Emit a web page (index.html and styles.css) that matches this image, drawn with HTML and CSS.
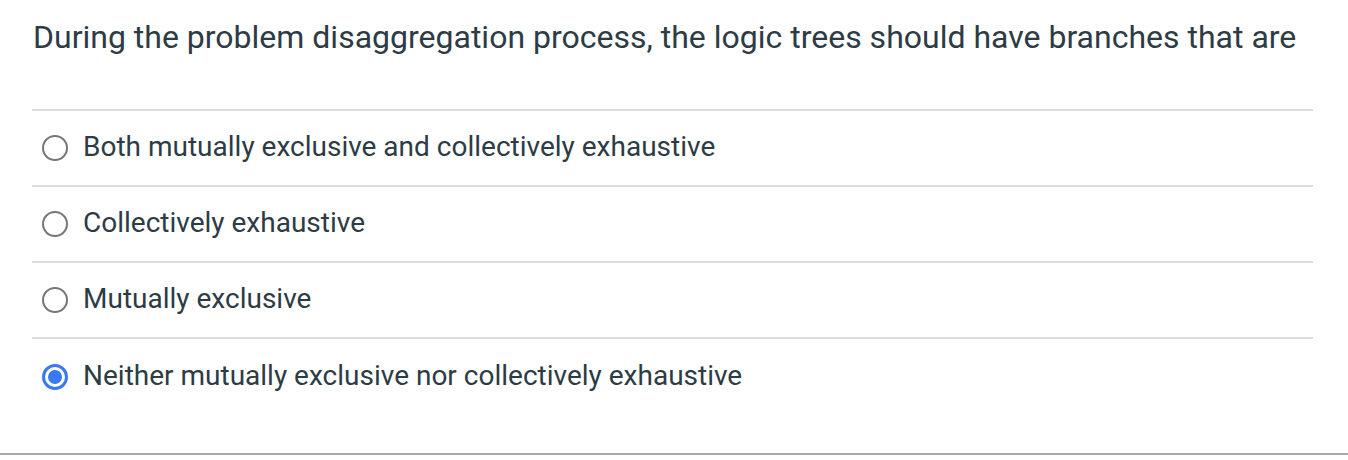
FILE: index.html
```html
<!DOCTYPE html>
<html>
<head>
<meta charset="utf-8">
<link rel="stylesheet" href="styles.css">
</head>
<body>
<div class="quiz">
  <div class="question">During the problem disaggregation process, the logic trees should have branches that are</div>
  <div class="answers">
    <label class="answer"><span class="radio"></span><span class="text">Both mutually exclusive and collectively exhaustive</span></label>
    <label class="answer"><span class="radio"></span><span class="text">Collectively exhaustive</span></label>
    <label class="answer"><span class="radio"></span><span class="text">Mutually exclusive</span></label>
    <label class="answer"><span class="radio checked"></span><span class="text">Neither mutually exclusive nor collectively exhaustive</span></label>
  </div>
</div>
<div class="bottom-rule"></div>
</body>
</html>
```
FILE: styles.css
```css
html, body {
  margin: 0;
  padding: 0;
  background: #fff;
}
body {
  font-family: Roboto, "Liberation Sans", sans-serif;
  color: #2d3b45;
  width: 1348px;
  height: 460px;
  overflow: hidden;
}
.quiz {
  padding: 0 35px 0 32px;
  height: 453px;
  box-sizing: border-box;
}
.question {
  font-size: 32px;
  line-height: 40px;
  padding: 17px 0 0 1px;
  height: 111px;
  box-sizing: border-box;
  border-bottom: 2px solid #dcdcdc;
}
.answer {
  display: flex;
  align-items: center;
  height: 76px;
  box-sizing: border-box;
  border-bottom: 2px solid #dcdcdc;
  font-size: 28px;
}
.answer:last-child {
  border-bottom: none;
}
.text {
  padding-bottom: 4px;
}
.radio {
  width: 26px;
  height: 26px;
  box-sizing: border-box;
  border: 2px solid #767676;
  border-radius: 50%;
  margin-left: 10px;
  margin-right: 15px;
  flex: none;
  position: relative;
}
.radio.checked {
  border: 3px solid #3b78f6;
}
.radio.checked::after {
  content: "";
  position: absolute;
  left: 3px;
  top: 3px;
  width: 14px;
  height: 14px;
  border-radius: 50%;
  background: #3b78f6;
}
.bottom-rule {
  height: 2px;
  background: #aaaaaa;
}
```
